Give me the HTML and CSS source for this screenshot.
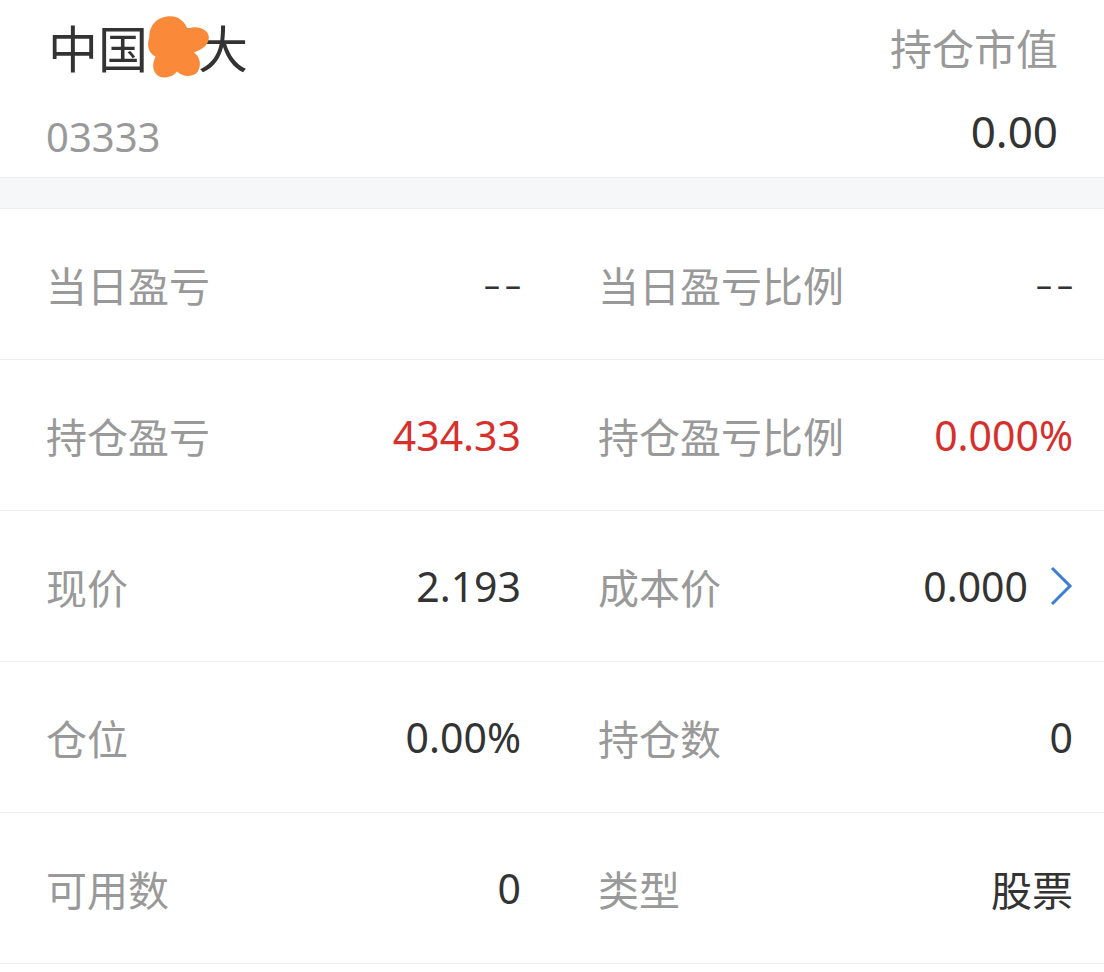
FILE: index.html
```html
<!DOCTYPE html>
<html lang="zh-CN">
<head>
    <meta charset="UTF-8">
    <meta name="viewport" content="width=device-width, initial-scale=1.0">
    <title>持仓详情</title>
    <link rel="stylesheet" href="styles.css">
</head>
<body>
    <div class="header">
        <div class="header-row">
            <div class="stock-name">
                中国<span class="masked">恒<svg class="blob" viewBox="0 0 62 62"><path d="M4 22 C4 8 14 2 24 2 C32 2 38 8 40 14 C48 10 60 14 60 22 C60 30 52 34 46 36 C52 40 54 50 48 56 C42 60 34 58 30 54 C26 60 14 62 10 56 C6 50 8 44 10 40 C2 36 2 28 4 22 Z" fill="#fa8a3a"/></svg></span>大
            </div>
            <div class="header-label">持仓市值</div>
        </div>
        <div class="header-row sub">
            <div class="stock-code">03333</div>
            <div class="header-value">0.00</div>
        </div>
    </div>

    <div class="band"></div>

    <div class="grid">
        <div class="cell"><span class="label">当日盈亏</span><span class="value dash">––</span></div>
        <div class="cell"><span class="label">当日盈亏比例</span><span class="value dash">––</span></div>

        <div class="cell"><span class="label">持仓盈亏</span><span class="value red">434.33</span></div>
        <div class="cell"><span class="label">持仓盈亏比例</span><span class="value red">0.000%</span></div>

        <div class="cell"><span class="label">现价</span><span class="value">2.193</span></div>
        <div class="cell">
            <span class="label">成本价</span>
            <span class="value with-arrow">0.000
                <svg class="arrow" viewBox="0 0 24 40"><path d="M3 2 L21 20 L3 38" fill="none" stroke="#3b7fd4" stroke-width="3"/></svg>
            </span>
        </div>

        <div class="cell"><span class="label">仓位</span><span class="value">0.00%</span></div>
        <div class="cell"><span class="label">持仓数</span><span class="value">0</span></div>

        <div class="cell"><span class="label">可用数</span><span class="value">0</span></div>
        <div class="cell"><span class="label">类型</span><span class="value">股票</span></div>
    </div>
</body>
</html>
```

FILE: styles.css
```css
body {
    margin: 0;
    background-color: #ffffff;
    font-family: "Noto Sans", "Noto Sans CJK SC", sans-serif;
    color: #333333;
}

.header {
    height: 178px;
    box-sizing: border-box;
    padding: 14px 46px 0 46px;
    border-bottom: 1px solid #eceef0;
}

.header-row {
    display: flex;
    justify-content: space-between;
    align-items: center;
    height: 64px;
}

.header-row.sub {
    height: 86px;
    margin-top: 10px;
}

.stock-name {
    font-size: 50px;
    color: #333333;
    padding-left: 2px;
}

.masked {
    position: relative;
}

.blob {
    position: absolute;
    left: -4px;
    top: -1px;
    width: 68px;
    height: 66px;
}

.header-label {
    font-size: 42px;
    color: #999999;
}

.stock-code {
    font-size: 40px;
    color: #999999;
    padding-top: 10px;
}

.header-value {
    font-size: 44px;
    color: #333333;
}

.band {
    height: 30px;
    background-color: #f5f7f9;
    border-bottom: 1px solid #eceef0;
}

.grid {
    display: grid;
    grid-template-columns: 1fr 1fr;
}

.cell {
    display: flex;
    justify-content: space-between;
    align-items: center;
    height: 150px;
    padding: 0 31px 0 46px;
    border-bottom: 1px solid #efefef;
}

.label {
    font-size: 41px;
    color: #999999;
}

.value {
    font-size: 41px;
    color: #333333;
}

.value.dash {
    font-size: 32px;
    letter-spacing: 5px;
    margin-right: -5px;
}

.value.red {
    color: #d6302d;
}

.with-arrow {
    display: flex;
    align-items: center;
}

.arrow {
    width: 24px;
    height: 40px;
    margin-left: 21px;
}
```
